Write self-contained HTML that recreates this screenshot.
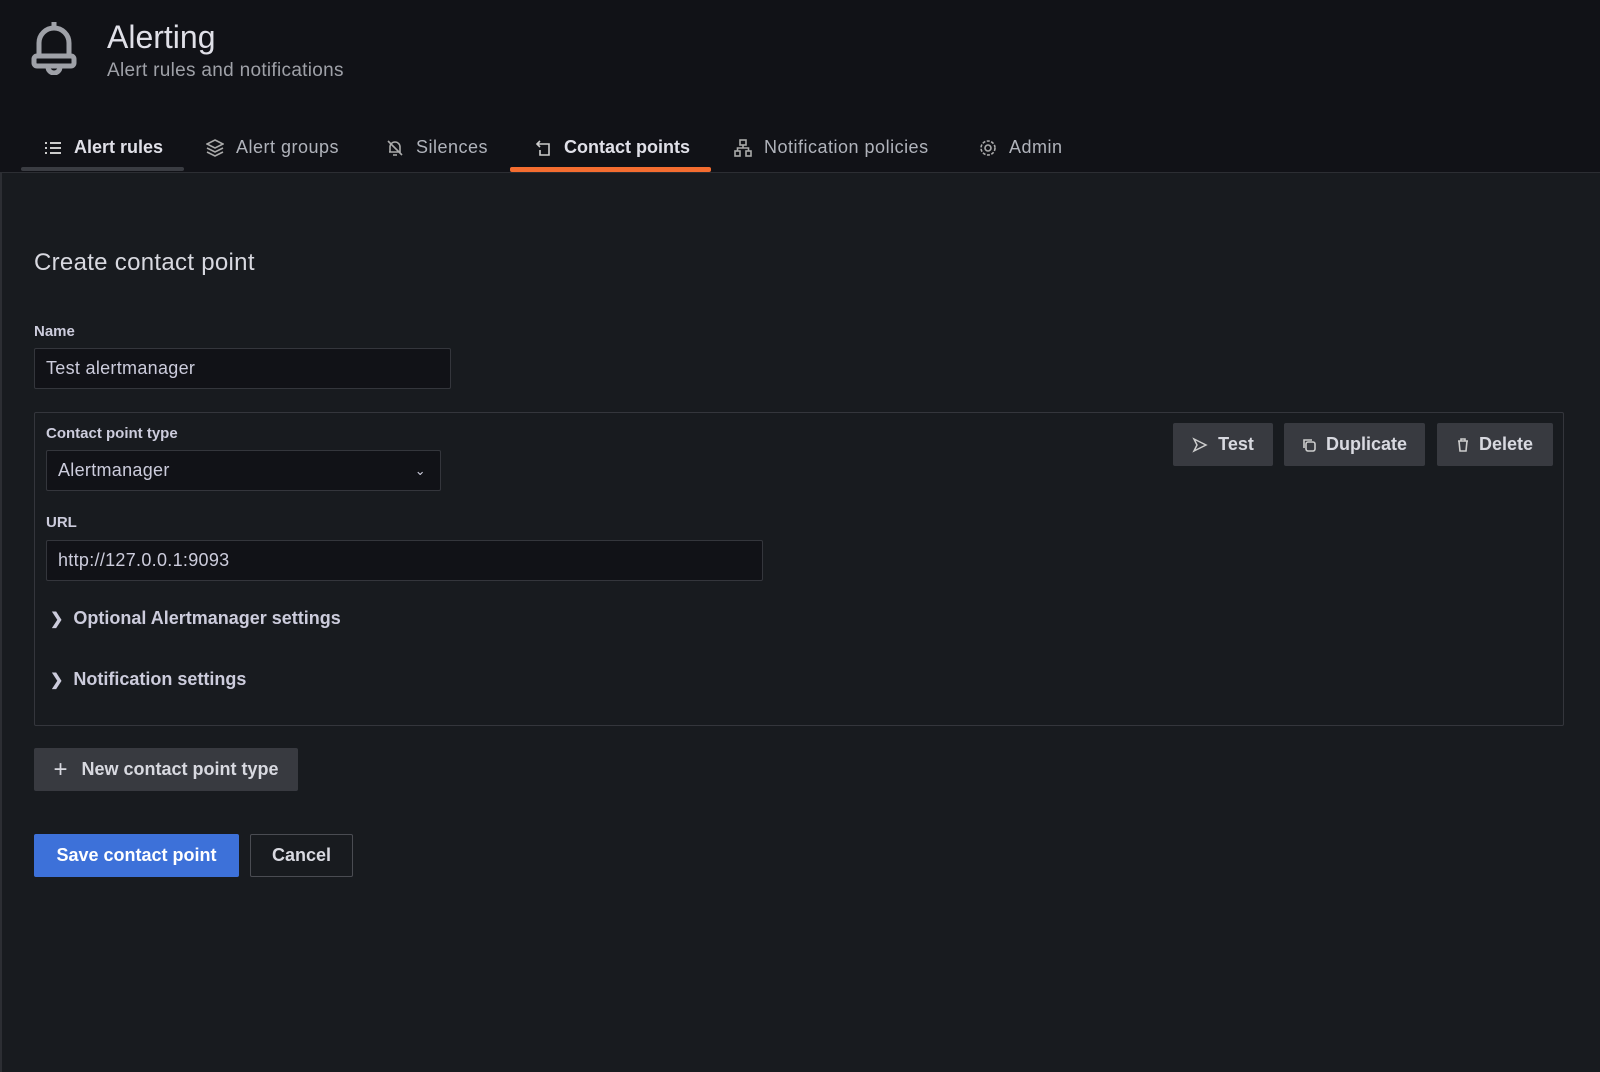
<!DOCTYPE html>
<html><head><meta charset="utf-8"><style>
*{box-sizing:border-box;margin:0;padding:0}
body{width:1600px;height:1072px;background:#181b1f;font-family:"Liberation Sans",sans-serif;color:#ccccdc;position:relative;overflow:hidden}
.hdr{position:absolute;left:0;top:0;width:1600px;height:173px;background:#111217;border-bottom:1px solid #2c2e33}
.abs{position:absolute}
.tab{position:absolute;top:137px;font-size:18px;letter-spacing:0.5px;color:#b0b3bb;display:flex;align-items:center;gap:12px;white-space:nowrap}
.tab svg{width:18px;height:18px}
.lbl{position:absolute;font-size:15px;font-weight:bold;color:#ccccdc}
.inp{position:absolute;background:#111217;border:1px solid #34363c;border-radius:2px;font-size:18px;letter-spacing:0.3px;color:#ccccdc;padding-left:11px;display:flex;align-items:center}
.btn{position:absolute;background:#383a40;border-radius:2px;font-size:18px;font-weight:bold;color:#d8d9e0;display:flex;align-items:center;justify-content:center;gap:10px}
.col{position:absolute;font-size:18px;font-weight:bold;color:#ccccdc;display:flex;align-items:center;gap:10px}
</style></head><body>
<div class="hdr"></div>
<div class="abs" style="left:0;top:173px;width:2px;height:899px;background:#2c2e33"></div>
<svg class="abs" style="left:29px;top:19px" width="50" height="56" viewBox="0 0 50 56" fill="none" stroke="#9fa1a8" stroke-width="5" stroke-linejoin="round"><path d="M25 3v5"/><path d="M10 38V24a15 15 0 0 1 30 0v14"/><rect x="5" y="37" width="40" height="10" rx="3"/><path d="M19 48a6 6 0 0 0 12 0"/></svg>
<div class="abs" style="left:107px;top:19px;font-size:32px;color:#e0e0e8">Alerting</div>
<div class="abs" style="left:107px;top:60px;font-size:19px;letter-spacing:0.3px;color:#9fa1a8">Alert rules and notifications</div>

<div class="tab" style="left:44px;color:#e0e0e8;font-weight:bold;letter-spacing:0"><svg viewBox="0 0 18 18" stroke="#ccc" stroke-width="2"><path d="M1 4h2M6 4h11M1 9h2M6 9h11M1 14h2M6 14h11"/></svg>Alert rules</div>
<div class="tab" style="left:206px"><svg viewBox="0 0 18 18" fill="none" stroke="#aaa" stroke-width="1.6"><path d="M9 1l8 4-8 4-8-4z M1 9l8 4 8-4 M1 13l8 4 8-4"/></svg>Alert groups</div>
<div class="tab" style="left:386px"><svg viewBox="0 0 18 18" fill="none" stroke="#aaa" stroke-width="1.6"><path d="M4 13V8a5 5 0 0 1 10 0v5H3 M7 16h4 M2 2l14 14"/></svg>Silences</div>
<div class="tab" style="left:534px;color:#e0e0e8;font-weight:bold;letter-spacing:0"><svg viewBox="0 0 18 18" fill="none" stroke="#ccc" stroke-width="1.6"><path d="M6 2L3 5l3 3 M3 5h12v11H6v-5"/></svg>Contact points</div>
<div class="tab" style="left:734px"><svg viewBox="0 0 18 18" fill="none" stroke="#aaa" stroke-width="1.6"><rect x="6" y="1" width="6" height="5"/><rect x="1" y="12" width="5" height="5"/><rect x="12" y="12" width="5" height="5"/><path d="M9 6v3M3.5 12V9h11v3"/></svg>Notification policies</div>
<div class="tab" style="left:979px"><svg viewBox="0 0 18 18" fill="none" stroke="#aaa" stroke-width="1.6"><circle cx="9" cy="9" r="3"/><circle cx="9" cy="9" r="7" stroke-dasharray="3 1.5"/></svg>Admin</div>
<div class="abs" style="left:21px;top:167px;width:163px;height:4px;background:#3a3c42;border-radius:2px"></div>
<div class="abs" style="left:510px;top:167px;width:201px;height:5px;background:#f46d30;border-radius:2px"></div>

<div class="abs" style="left:34px;top:249px;font-size:24px;letter-spacing:0.3px;color:#d8d9e0">Create contact point</div>
<div class="lbl" style="left:34px;top:323px">Name</div>
<div class="inp" style="left:34px;top:348px;width:417px;height:41px">Test alertmanager</div>

<div class="abs" style="left:34px;top:412px;width:1530px;height:314px;border:1px solid #34363c;border-radius:2px"></div>
<div class="lbl" style="left:46px;top:425px">Contact point type</div>
<div class="inp" style="left:46px;top:450px;width:395px;height:41px;background:#111217">Alertmanager<span style="position:absolute;right:14px;font-size:13px">&#8964;</span></div>
<div class="lbl" style="left:46px;top:514px">URL</div>
<div class="inp" style="left:46px;top:540px;width:717px;height:41px">http://127.0.0.1:9093</div>
<div class="col" style="left:50px;top:608px"><span style="font-size:16px">&#10095;</span>Optional Alertmanager settings</div>
<div class="col" style="left:50px;top:669px"><span style="font-size:16px">&#10095;</span>Notification settings</div>

<div class="btn" style="left:1173px;top:423px;width:100px;height:43px"><svg width="16" height="16" viewBox="0 0 16 16" fill="none" stroke="#ccc" stroke-width="1.5"><path d="M2 2l12 6-12 6 3-6z"/></svg>Test</div>
<div class="btn" style="left:1284px;top:423px;width:141px;height:43px"><svg width="14" height="14" viewBox="0 0 14 14" fill="none" stroke="#ccc" stroke-width="1.6"><rect x="4" y="4" width="9" height="9" rx="2"/><path d="M2 10V2h8"/></svg>Duplicate</div>
<div class="btn" style="left:1437px;top:423px;width:116px;height:43px"><svg width="12" height="14" viewBox="0 0 12 14" fill="none" stroke="#ccc" stroke-width="1.6"><path d="M1 3h10M4 3V1h4v2M2 3l1 10h6l1-10"/></svg>Delete</div>

<div class="btn" style="left:34px;top:748px;width:264px;height:43px;gap:14px"><span style="font-size:24px;font-weight:normal">+</span>New contact point type</div>
<div class="btn" style="left:34px;top:834px;width:205px;height:43px;background:#3d71d9;color:#fff">Save contact point</div>
<div class="btn" style="left:250px;top:834px;width:103px;height:43px;background:transparent;border:1px solid #4a4c52">Cancel</div>
</body></html>
